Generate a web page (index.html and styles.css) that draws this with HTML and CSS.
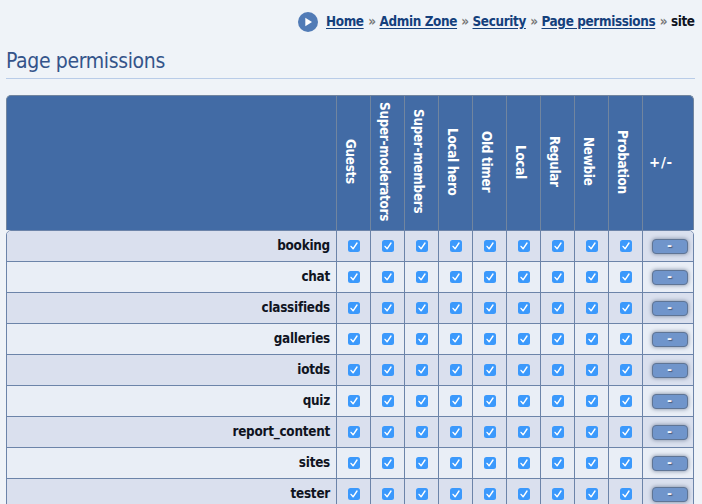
FILE: index.html
```html
<!DOCTYPE html>
<html lang="en">
<head>
<meta charset="utf-8">
<title>Page permissions</title>
<link rel="stylesheet" href="styles.css">
</head>
<body>
<nav class="breadcrumbs">
  <svg class="go" viewBox="0 0 20 20"><circle cx="10" cy="10" r="10" fill="#517bb6"/><path d="M7.3 5.8 14 10l-6.7 4.2z" fill="#fff"/></svg>
  <a class="w-home" href="#">Home</a><span class="sep">»</span>
  <a class="w-admin" href="#">Admin Zone</a><span class="sep">»</span>
  <a class="w-security" href="#">Security</a><span class="sep">»</span>
  <a class="w-page" href="#">Page permissions</a><span class="sep">»</span>
  <b>site</b>
</nav>
<h1>Page permissions</h1>
<main class="permissions">
  <div class="row head">
    <div></div>
    <div class="group"><span>Guests</span></div>
    <div class="group"><span>Super-moderators</span></div>
    <div class="group"><span>Super-members</span></div>
    <div class="group"><span>Local hero</span></div>
    <div class="group"><span>Old timer</span></div>
    <div class="group"><span>Local</span></div>
    <div class="group"><span>Regular</span></div>
    <div class="group"><span>Newbie</span></div>
    <div class="group"><span>Probation</span></div>
    <div class="toggle-head">+/-</div>
  </div>
  <div class="body" id="rows"></div>
</main>
<script src="script.js"></script>
</body>
</html>
```
FILE: styles.css
```css
* { box-sizing: border-box; }
html { height: 100%; overflow: hidden; }
body {
  margin: 0;
  height: 504px;
  overflow: hidden;
  background: #eff3f8;
  color: #10141f;
  font: bold 13.4px/16px "DejaVu Sans Condensed", "DejaVu Sans", sans-serif;
  font-stretch: condensed;
  letter-spacing: -0.25px;
}
.breadcrumbs {
  display: flex;
  justify-content: flex-end;
  align-items: center;
  height: 43px;
  margin-bottom: 1px;
  padding-right: 7px;
  white-space: nowrap;
}
.go { width: 20px; height: 20px; margin-right: 8px; }
.breadcrumbs a { color: #14407c; text-decoration: underline; text-underline-offset: 2px; letter-spacing: -0.36px; }
.w-home { width: 38.5px; }
.w-admin { width: 78px; }
.w-security { width: 54px; }
.w-page { width: 114.5px; }
.breadcrumbs b { width: 24px; letter-spacing: -0.45px; }
.sep { width: 15px; text-align: center; color: #777; }
h1 {
  margin: 0 7px 16px 6px;
  height: 35px;
  border-bottom: 1px solid #b9cce8;
  color: #34548a;
  font-size: 21px;
  line-height: 35px;
  font-weight: normal;
  letter-spacing: -0.36px;
}
.permissions { width: 688px; margin-left: 6px; }
.row {
  display: grid;
  grid-template-columns: 330px repeat(9, 34px) 50px;
  height: 31px;
  border-bottom: 1px solid #6c84a9;
}
.row > div {
  display: flex;
  align-items: center;
  justify-content: center;
  border-left: 1px solid #6c84a9;
}
.row > div:first-child { border-left: 0; }
.head {
  height: 135px;
  background: #426ba5;
  border: 1px solid #71859f;
  border-bottom: 0;
  border-radius: 5px 5px 0 0;
  color: #fff;
  grid-template-columns: 329px repeat(9, 34px) 51px;
}
.row.head > div { border-color: #71859f; }
.head .group span { writing-mode: vertical-rl; white-space: nowrap; margin: 0 7px 3px 0; letter-spacing: -0.3px; }
.row .toggle-head { justify-content: flex-start; padding-left: 6px; letter-spacing: 0.7px; font-family: "DejaVu Sans", sans-serif; font-stretch: normal; }
.body { border: 1px solid #6c84a9; border-radius: 5px 5px 0 0; overflow: hidden; }
.body .row { background: #e9eef6; grid-template-columns: 329px repeat(9, 34px) 51px; }
.body .row:nth-child(odd) { background: #dae0ee; }
.row > .name { justify-content: flex-end; padding-right: 6px; padding-bottom: 1px; }
.check { width: 12px; height: 12px; }
.row > .action { padding-left: 3px; padding-top: 1px; }
button {
  width: 36px;
  height: 15px;
  padding: 0;
  border: 1px solid #5f7595;
  border-radius: 4px;
  background: #7095cb;
  box-shadow: 0 0 4px #75839b;
  color: #f4f6fa;
  font: bold 12px/13px "DejaVu Sans", sans-serif;
  text-shadow: 1px 1px 1px #4b5d7d;
}
```
FILE: script.js
```js
const pages = ["booking", "chat", "classifieds", "galleries", "iotds", "quiz", "report_content", "sites", "tester"];
const check = '<div><svg class="check" role="checkbox" aria-checked="true" viewBox="0 0 12 12"><rect width="12" height="12" rx="2.5" fill="#3b99fc"/><path d="M3 6.4 5.1 8.8 9 3" fill="none" stroke="#fff" stroke-width="1.4" stroke-linecap="round" stroke-linejoin="round"/></svg></div>';
document.getElementById("rows").innerHTML = pages.map(name =>
  `<div class="row"><div class="name">${name}</div>${check.repeat(9)}<div class="action"><button>-</button></div></div>`
).join("");
```
